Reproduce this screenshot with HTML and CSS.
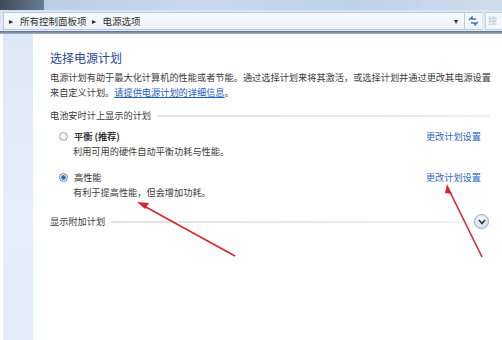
FILE: index.html
```html
<!DOCTYPE html>
<html lang="zh-CN">
<head>
    <meta charset="UTF-8">
    <title>电源选项</title>
    <link rel="stylesheet" href="styles.css">
</head>
<body>
    <div class="window">
        <!-- window chrome -->
        <div class="titlebar"><span class="titlebar-dark"></span></div>
        <div class="addressbar">
            <div class="crumbs">
                <span class="crumb-arrow">&#9656;</span>
                <span class="crumb">所有控制面板项</span>
                <span class="crumb-arrow">&#9656;</span>
                <span class="crumb">电源选项</span>
                <span class="crumb-drop">&#9662;</span>
            </div>
            <div class="refresh">
                <svg width="11" height="10" viewBox="0 0 11 10">
                    <path d="M1 4 L4 1 L4 3 L8 3" fill="none" stroke="#3f6fb0" stroke-width="1.3"/>
                    <path d="M10 6 L7 9 L7 7 L3 7" fill="none" stroke="#3f6fb0" stroke-width="1.3"/>
                </svg>
            </div>
            <div class="search">搜</div>
        </div>
        <div class="shadow-line"></div>

        <div class="main">
            <div class="sidebar"></div>
            <div class="content">
                <h1 class="page-title">选择电源计划</h1>
                <p class="intro">电源计划有助于最大化计算机的性能或者节能。通过选择计划来将其激活，或选择计划并通过更改其电源设置来自定义计划。<a href="#">请提供电源计划的详细信息</a>。</p>

                <div class="section-head">
                    <span>电池安时计上显示的计划</span>
                    <span class="rule"></span>
                </div>

                <div class="plan">
                    <div class="plan-main">
                        <div class="plan-name"><span class="radio"></span><b>平衡 (推荐)</b></div>
                        <div class="plan-desc">利用可用的硬件自动平衡功耗与性能。</div>
                    </div>
                    <a class="plan-link" href="#">更改计划设置</a>
                </div>

                <div class="plan plan-second">
                    <div class="plan-main">
                        <div class="plan-name"><span class="radio checked"></span>高性能</div>
                        <div class="plan-desc">有利于提高性能，但会增加功耗。</div>
                    </div>
                    <a class="plan-link" href="#">更改计划设置</a>
                </div>

                <div class="section-head extra">
                    <span>显示附加计划</span>
                    <span class="rule"></span>
                    <span class="expand">
                        <svg width="8" height="6" viewBox="0 0 8 6">
                            <path d="M1 1 L4 4.5 L7 1" fill="none" stroke="#1d3550" stroke-width="1.6"/>
                        </svg>
                    </span>
                </div>
            </div>
        </div>

        <!-- red annotation arrows drawn over the screenshot -->
        <svg class="annotations" width="502" height="340" viewBox="0 0 502 340">
            <line x1="235" y1="256" x2="144" y2="206" stroke="#d8262e" stroke-width="1.6"/>
            <polygon points="137,202 149,203 145,209" fill="#d8262e"/>
            <line x1="482" y1="257" x2="450" y2="192" stroke="#d8262e" stroke-width="1.6"/>
            <polygon points="447,184 452,194 445,193" fill="#d8262e"/>
        </svg>
    </div>
</body>
</html>
```

FILE: styles.css
```css
body {
    margin: 0;
    font-family: "Noto Sans CJK SC", "Noto Sans", sans-serif;
    background: #fff;
}

.window {
    position: relative;
    width: 502px;
    height: 340px;
    overflow: hidden;
    background: #fff;
}

/* top chrome */
.titlebar {
    height: 10px;
    background: linear-gradient(90deg, #b9cbe0 0%, #c8d8ea 40%, #bfd1e6 70%, #cfdcec 100%);
    display: flex;
}
.titlebar-dark {
    width: 44px;
    background: linear-gradient(90deg, #3c4a5a, #6a7c90);
}

.addressbar {
    height: 21px;
    display: flex;
    align-items: center;
    gap: 3px;
    padding: 0 0 0 3px;
    background: linear-gradient(#d7e3f1, #e3ecf6);
}
.crumbs {
    flex: 1;
    height: 16px;
    display: flex;
    align-items: center;
    font-size: 9.5px;
    color: #333;
    background: linear-gradient(#f6f9fc, #eef3f9);
    border: 1px solid #b8c8dc;
    border-right: none;
}
.crumb-arrow {
    font-size: 8px;
    color: #222;
    margin: 0 7px 0 5px;
}
.crumb-drop {
    margin-left: auto;
    margin-right: 6px;
    font-size: 8px;
    color: #333;
}
.refresh {
    width: 17px;
    height: 16px;
    display: flex;
    align-items: center;
    justify-content: center;
    border-left: 1px solid #c0cfe0;
    margin-left: -3px;
    background: #f2f6fb;
    border-top: 1px solid #b8c8dc;
    border-bottom: 1px solid #b8c8dc;
}
.search {
    width: 14px;
    height: 16px;
    font-size: 9px;
    color: #b8c4d2;
    background: #f4f7fb;
    border: 1px solid #c2d0e0;
    border-right: none;
    padding-left: 2px;
    line-height: 16px;
}
.shadow-line {
    height: 3px;
    background: linear-gradient(#55708e, #a6b6c8);
}

/* body */
.main {
    display: flex;
    height: 306px;
}
.sidebar {
    width: 30px;
    margin-left: 3px;
    background: linear-gradient(#dfe8f6, #e6eefb 60%, #e3ecfa);
}
.content {
    flex: 1;
    padding: 16px 8px 0 17px;
    color: #3c3c3c;
    font-size: 9.2px;
}

.page-title {
    margin: 0;
    font-size: 12px;
    line-height: 16px;
    font-weight: normal;
    color: #2a4796;
}
.intro {
    margin: 4px 0 0;
    line-height: 15px;
}
.intro a {
    color: #2160c0;
}

.section-head {
    display: flex;
    align-items: center;
    gap: 6px;
    margin-top: 8px;
    line-height: 15px;
    padding-right: 4px;
}
.rule {
    flex: 1;
    height: 2px;
    background: linear-gradient(90deg, #e2e2e2, #eaeaea 80%, #f0f0f0);
}

.plan {
    display: flex;
    align-items: flex-start;
    margin-top: 6px;
    padding-left: 9px;
    padding-right: 13px;
    line-height: 15px;
}
.plan-second {
    margin-top: 11px;
}
.plan-main {
    flex: 1;
}
.plan-name {
    display: flex;
    align-items: center;
    gap: 6px;
    color: #333;
}
.plan-name b {
    font-weight: bold;
}
.plan-desc {
    padding-left: 14px;
}
.plan-link {
    color: #2c68c0;
    text-decoration: none;
}

.radio {
    width: 7px;
    height: 7px;
    border-radius: 50%;
    border: 1px solid #a0a8b2;
    background: radial-gradient(circle at 40% 35%, #ffffff, #dde2e8);
}
.radio.checked {
    border-color: #6c8cb0;
    background: radial-gradient(circle, #1f5fae 0, #3c7fd0 2px, #e4ecf5 2.6px);
}

.extra {
    margin-top: 14px;
    padding-right: 5px;
}
.expand {
    width: 13px;
    height: 13px;
    border-radius: 50%;
    border: 1px solid #8fa8c0;
    background: radial-gradient(circle at 45% 35%, #f4f9fe, #c4daf0);
    display: flex;
    align-items: center;
    justify-content: center;
    margin-left: 2px;
}

.annotations {
    position: absolute;
    left: 0;
    top: 0;
    pointer-events: none;
}
```
